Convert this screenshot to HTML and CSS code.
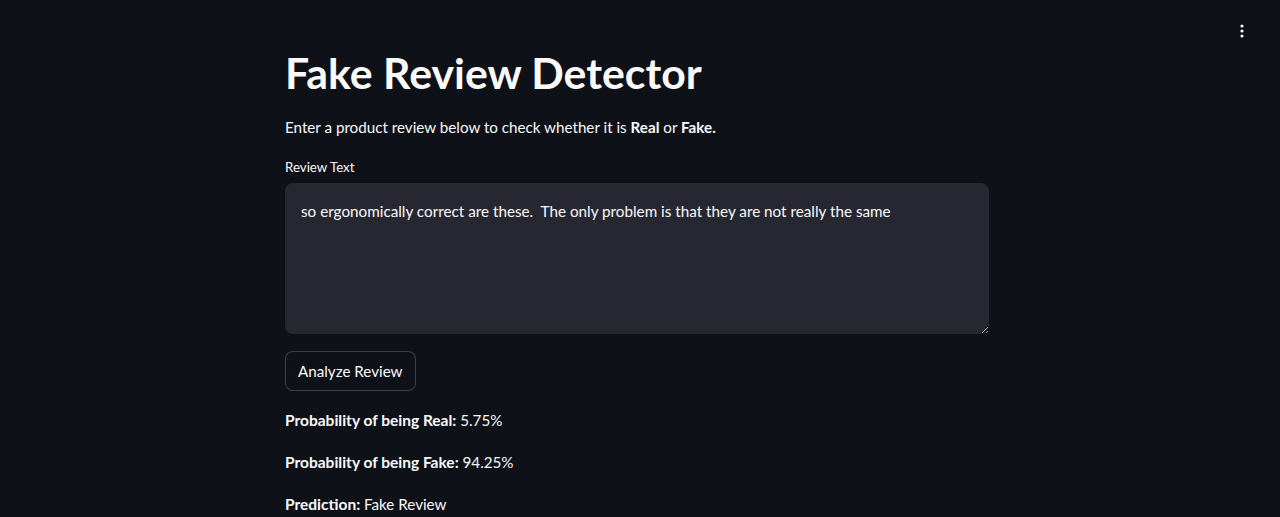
FILE: index.html
```html
<!DOCTYPE html>
<html lang="en">
<head>
<meta charset="utf-8">
<title>Fake Review Detector</title>
<link rel="stylesheet" href="styles.css">
</head>
<body>
<header class="toolbar">
  <button class="menu-btn" aria-label="Main menu">
    <svg width="16" height="16" viewBox="0 0 16 16"><circle cx="8" cy="3" r="1.6" fill="#fafafa"/><circle cx="8" cy="8" r="1.6" fill="#fafafa"/><circle cx="8" cy="13" r="1.6" fill="#fafafa"/></svg>
  </button>
</header>
<main class="main">
  <div class="block">
    <h1 class="title">Fake Review Detector</h1>
    <p class="intro">Enter a product review below to check whether it is <strong>Real</strong> or <strong>Fake.</strong></p>
    <label class="label" for="review">Review Text</label>
    <textarea id="review" class="textarea">so ergonomically correct are these.  The only problem is that they are not really the same</textarea>
    <button class="btn">Analyze Review</button>
    <p class="result"><strong>Probability of being Real:</strong> 5.75%</p>
    <p class="result"><strong>Probability of being Fake:</strong> 94.25%</p>
    <p class="result"><strong>Prediction:</strong> Fake Review</p>
  </div>
</main>
</body>
</html>
```

FILE: styles.css
```css
* { box-sizing: border-box; }
html, body {
  margin: 0;
  padding: 0;
  background: #0e1117;
  color: #fafafa;
  font-family: "Source Sans Pro", Lato, "Noto Sans", sans-serif;
  height: 100%;
  overflow: hidden;
}
.toolbar {
  position: absolute;
  top: 0;
  right: 0;
  padding: 19px 26px 0 0;
}
.menu-btn {
  background: transparent;
  border: 0;
  padding: 4px;
  display: flex;
}
.main {
  display: flex;
  justify-content: center;
  padding-top: 46px;
}
.block {
  width: 704px;
  margin-left: -6px;
  display: flex;
  flex-direction: column;
  align-items: flex-start;
}
.title {
  margin: 0;
  font-size: 42.8px;
  line-height: 53px;
  font-weight: 700;
}
.intro {
  margin: 16px 0 0;
  font-size: 15.2px;
  line-height: 24px;
}
.intro strong { font-weight: 700; }
.label {
  margin-top: 18px;
  font-size: 13.3px;
  line-height: 20px;
}
.textarea {
  margin-top: 6px;
  width: 704px;
  height: 151px;
  background: #262730;
  color: #fafafa;
  border: 0;
  border-radius: 8px;
  padding: 17px 16px;
  font-family: inherit;
  font-size: 15.25px;
  line-height: 22px;
  resize: vertical;
  outline: none;
}
.btn {
  margin-top: 17px;
  height: 40px;
  padding: 0 12px;
  background: #0e1117;
  color: #fafafa;
  border: 1px solid rgba(250, 250, 250, 0.2);
  border-radius: 8px;
  font-family: inherit;
  font-size: 15.2px;
}
.result {
  margin: 17px 0 0;
  font-size: 15.2px;
  line-height: 24px;
}
.result + .result { margin-top: 18px; }
.result strong { font-weight: 700; font-size: 15.5px; }
```
